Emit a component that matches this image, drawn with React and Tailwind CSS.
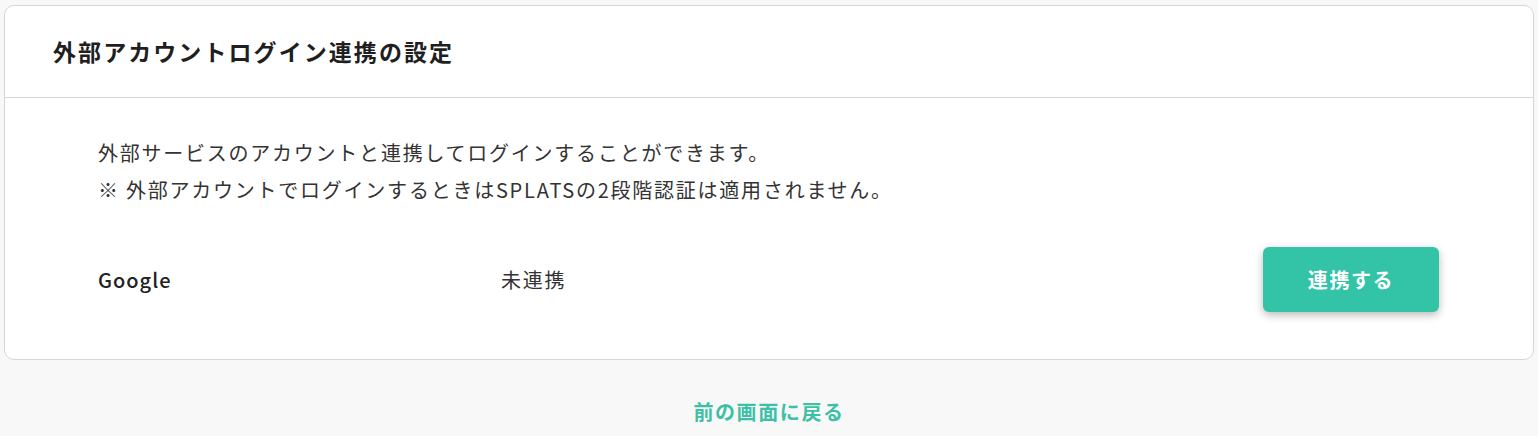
export default function App() {
  const font = { fontFamily: '"Noto Sans CJK JP", "Noto Sans", sans-serif' };
  return (
    <div className="min-h-[436px] w-full bg-[#f8f8f8] px-[4px] pt-[5px] pb-[20px] text-[#333333]" style={font}>
      <div className="rounded-[10px] border border-[#d6d6d6] bg-white">
        <div className="flex h-[92px] items-center border-b border-[#d6d6d6] pl-[48px]">
          <h1 className="text-[23px] font-bold tracking-[0.09em] text-[#1f1f1f]">外部アカウントログイン連携の設定</h1>
        </div>
        <div className="px-[93px] pt-[36px] pb-[47px]">
          <div className="text-[20px] leading-[37px] tracking-[0.088em]">
            <p>外部サービスのアカウントと連携してログインすることができます。</p>
            <p>※ 外部アカウントでログインするときはSPLATSの2段階認証は適用されません。</p>
          </div>
          <div className="mt-[39px] flex items-center">
            <div className="w-[403px] text-[20px] font-medium tracking-[0.05em] text-[#222222]">Google</div>
            <div className="flex-1 text-[20px] tracking-[0.09em]">未連携</div>
            <button className="mr-[1px] h-[65px] w-[176px] rounded-[6px] bg-[#33c3a7] text-[20px] font-bold tracking-[0.08em] text-white shadow-[0_3px_8px_rgba(0,0,0,0.28)]">
              連携する
            </button>
          </div>
        </div>
      </div>
      <div className="mt-[37px] text-center">
        <a className="text-[20px] font-bold tracking-[0.08em] text-[#3dc0a5]">前の画面に戻る</a>
      </div>
    </div>
  );
}
